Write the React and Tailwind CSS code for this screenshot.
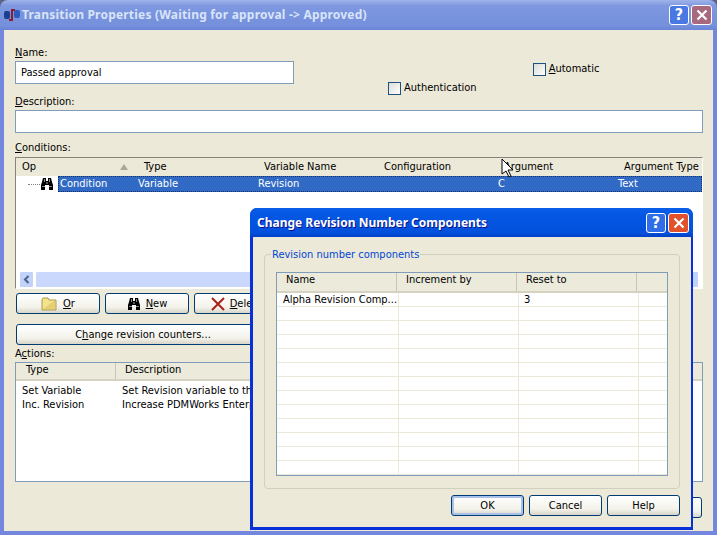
import React from "react";

const Binoculars = () => (
  <svg width="14" height="14" viewBox="0 0 14 14">
    <path d="M1 13V8l1-3 1-4h3v3h2V1h3l1 4 1 3v5H9V8H5v5z" fill="#000" />
    <path d="M2 9h3v1H2zM9 9h3v1H9zM4 2h1v3H4zM9 2h1v3H9z" fill="#8a8a8a" />
    <path d="M6 5h2v2H6z" fill="#555" />
  </svg>
);

const Folder = () => (
  <svg width="16" height="14" viewBox="0 0 16 14">
    <path d="M1 3l1-2h5l1 2h7v10H1z" fill="#f4e38a" stroke="#a89a52" />
    <path d="M2 12l11-8h1v8z" fill="#e5cf72" />
  </svg>
);

const RedX = () => (
  <svg width="16" height="16" viewBox="0 0 16 16">
    <path d="M2 2l12 12M14 2L2 14" stroke="#a8201a" strokeWidth="2" fill="none" />
  </svg>
);

const AppIcon = () => (
  <svg width="16" height="14" viewBox="0 0 16 14">
    <rect x="0" y="3" width="6" height="8" rx="2" fill="#1d3f90" />
    <rect x="10" y="2" width="6" height="8" rx="2" fill="#2a5cc0" />
    <path d="M5 12h3V2h3" stroke="#8c1c2c" strokeWidth="2" fill="none" />
  </svg>
);

const Cursor = () => (
  <svg width="13" height="20" viewBox="0 0 13 20" className="absolute left-[501px] top-[158px]">
    <path d="M1 1v15l4-3 3 6 2-1-3-6h5z" fill="#fff" stroke="#000" strokeWidth="1" />
  </svg>
);

const XpButton = ({ className = "", children }) => (
  <div
    className={`flex h-[21px] items-center justify-center rounded-[3px] border border-[#003c74] bg-[linear-gradient(#ffffff,#f3f2ea_70%,#d8d4c8)] text-black ${className}`}
  >
    {children}
  </div>
);

const CaptionButtons = ({ active }) => (
  <div className="flex gap-[2px]">
    <div
      className={`flex h-[20px] w-[20px] items-center justify-center rounded-[3px] border border-white text-[16px] font-bold text-white ${
        active ? "bg-[#2f6ee8]" : "bg-[#4a78e2]"
      }`}
    >
      ?
    </div>
    <div
      className={`flex h-[20px] w-[21px] items-center justify-center rounded-[3px] border border-white ${
        active ? "bg-[#e0512c]" : "bg-[#a8687e]"
      }`}
    >
      <svg width="12" height="12" viewBox="0 0 12 12">
        <path d="M1.5 1.5l9 9M10.5 1.5l-9 9" stroke="#fff" strokeWidth="2.2" fill="none" />
      </svg>
    </div>
  </div>
);

const Check = ({ label, className = "" }) => (
  <div className={`flex h-[14px] items-center gap-[3px] ${className}`}>
    <div className="h-[13px] w-[13px] border border-[#1c5180] bg-[linear-gradient(135deg,#dcdcd7,#ffffff)]" />
    {label}
  </div>
);

const dialogRows = Array.from({ length: 13 });

const ChangeDialog = () => (
  <div className="absolute left-[250px] top-[208px] flex h-[322px] w-[443px] flex-col rounded-t-[7px] bg-[#0831d9] pb-[3px] pl-[3px] pr-[2px]">
    <div className="-mx-[3px] -mr-[2px] flex h-[29px] shrink-0 items-center justify-between rounded-t-[7px] bg-[linear-gradient(#0a5fe8,#0458e4_20%,#0350dc_85%,#0340c4)] pl-[7px] pr-[4px]">
      <span className="font-['Noto_Sans'] text-[12px] font-bold text-white [text-shadow:1px_1px_#0f1089]">
        Change Revision Number Components
      </span>
      <CaptionButtons active />
    </div>
    <div className="flex flex-1 flex-col bg-[#ece9d8] px-[11px] pt-[17px]">
      <div className="relative h-[235px] rounded-[4px] border border-[#d0d0bf] px-[11px] pt-[17px]">
        <span className="absolute -top-[7px] left-[6px] bg-[#ece9d8] px-[1px] text-[#0046d5]">
          Revision number components
        </span>
        <div className="h-[204px] border border-[#7f9db9] bg-white">
          <div className="grid h-[20px] grid-cols-[120px_120px_120px_1fr] border-b-2 border-[#d6d2c2] bg-[#ebeadb]">
            <div className="border-r border-[#c7c5b2] pl-[9px]">Name</div>
            <div className="border-r border-[#c7c5b2] pl-[9px]">Increment by</div>
            <div className="border-r border-[#c7c5b2] pl-[9px]">Reset to</div>
            <div />
          </div>
          {dialogRows.map((_, i) => (
            <div
              key={i}
              className="grid h-[14px] grid-cols-[122px_120px_120px_1fr] border-b border-[#ece9d8] leading-[14px]"
            >
              <div className="overflow-hidden whitespace-nowrap border-r border-[#ece9d8] pl-[6px]">
                {i === 0 ? "Alpha Revision Comp..." : ""}
              </div>
              <div className="border-r border-[#ece9d8]" />
              <div className="border-r border-[#ece9d8] pl-[5px]">{i === 0 ? "3" : ""}</div>
              <div />
            </div>
          ))}
        </div>
      </div>
      <div className="mt-[6px] flex justify-end gap-[5px] pr-0">
        <XpButton className="w-[73px] shadow-[inset_0_0_0_2px_#a8c0ea]">OK</XpButton>
        <XpButton className="w-[73px]">Cancel</XpButton>
        <XpButton className="w-[73px]">Help</XpButton>
      </div>
    </div>
  </div>
);

export default function App() {
  return (
    <div className="relative flex h-[535px] w-[717px] flex-col overflow-hidden bg-[#5a6488] font-['DejaVu_Sans_Condensed','Noto_Sans',sans-serif] text-[11px] leading-[14px] text-black">
      {/* main window, inactive caption */}
      <div className="flex h-[30px] shrink-0 items-center justify-between rounded-t-[8px] bg-[linear-gradient(#a0b4ea,#7d97e0_20%,#7590dc_85%,#6a84d6)] pl-[4px] pr-[5px]">
        <div className="flex items-center gap-[2px]">
          <AppIcon />
          <span className="font-['Noto_Sans'] text-[12px] font-bold tracking-[0.2px] text-[#d8e4f8]">
            Transition Properties (Waiting for approval -&gt; Approved)
          </span>
        </div>
        <CaptionButtons />
      </div>

      <div className="flex flex-1 flex-col bg-[#7387de] px-[4px] pb-[4px]">
        <div className="flex flex-1 flex-col bg-[#ece9d8] pl-[11px] pr-[10px] pt-[16px]">
          <div className="flex h-[49px]">
            <div className="w-[279px]">
              <div>
                <span className="underline">N</span>ame:
              </div>
              <div className="mt-[1px] flex h-[23px] items-center border border-[#7f9db9] bg-white pl-[5px]">
                Passed approval
              </div>
            </div>
            <Check label="Authentication" className="ml-[94px] mt-[35px]" />
            <Check
              label={
                <span>
                  <span className="underline">A</span>utomatic
                </span>
              }
              className="ml-[56px] mt-[16px]"
            />
          </div>

          <div>
            <span className="underline">D</span>escription:
          </div>
          <div className="mt-[1px] h-[23px] border border-[#7f9db9] bg-white" />

          <div className="mt-[8px]">
            <span className="underline">C</span>onditions:
          </div>
          {/* conditions list */}
          <div className="mt-[2px] flex h-[132px] flex-col border border-b-white border-l-[#85837a] border-r-white border-t-[#85837a] bg-white">
            <div className="relative grid h-[18px] shrink-0 grid-cols-[121px_120px_120px_120px_120px_1fr] items-center bg-[#ece9d8] pl-[6px]">
              <div>Op</div>
              <div className="pl-[1px]">Type</div>
              <div className="pl-[1px]">Variable Name</div>
              <div className="pl-[1px]">Configuration</div>
              <div className="pl-[1px]">Argument</div>
              <div className="pl-[1px]">Argument Type</div>
              <div className="absolute left-[104px] top-[6px] h-0 w-0 border-x-[4px] border-b-[6px] border-x-transparent border-b-[#aca899]" />
            </div>
            <div className="flex h-[16px] shrink-0 items-center">
              <div className="ml-[12px] w-[12px] border-t border-dotted border-[#808080]" />
              <Binoculars />
              <div className="ml-[4px] grid h-[16px] flex-1 grid-cols-[78px_120px_240px_120px_1fr] items-center border border-dotted border-[#16306a] bg-[#316ac5] pl-[1px] text-white">
                <div>Condition</div>
                <div>Variable</div>
                <div>Revision</div>
                <div>C</div>
                <div>Text</div>
              </div>
            </div>
            <div className="flex-1" />
            <div className="flex h-[17px] shrink-0 gap-[1px] px-[3px]">
              <div className="flex w-[15px] items-center justify-center rounded-[2px] border border-white bg-[#c1d3fb] text-[#4d6185]">
                <svg width="7" height="9" viewBox="0 0 7 9">
                  <path d="M5.5 1L2 4.5 5.5 8" stroke="#4d6185" strokeWidth="2" fill="none" />
                </svg>
              </div>
              <div className="flex-1 rounded-[2px] border border-white bg-[#c9d8fc]" />
              <div className="w-[15px] rounded-[2px] border border-white bg-[#c1d3fb]" />
            </div>
          </div>

          <div className="mt-[4px] flex gap-[5px] pl-[1px]">
            <XpButton className="w-[84px] gap-[6px]">
              <Folder />
              <span>
                <span className="underline">O</span>r
              </span>
            </XpButton>
            <XpButton className="w-[84px] gap-[5px]">
              <Binoculars />
              <span>
                <span className="underline">N</span>ew
              </span>
            </XpButton>
            <XpButton className="w-[84px] gap-[4px]">
              <RedX />
              <span>
                <span className="underline">D</span>elete
              </span>
            </XpButton>
          </div>
          <XpButton className="ml-[1px] mt-[10px] w-[254px]">
            <span>
              C<span className="underline">h</span>ange revision counters...
            </span>
          </XpButton>

          <div className="mt-[2px]">
            A<span className="underline">c</span>tions:
          </div>
          {/* actions list */}
          <div className="mt-[1px] h-[120px] border border-[#7f9db9] bg-white">
            <div className="grid h-[18px] grid-cols-[100px_1fr] border-b-2 border-[#d6d2c2] bg-[#ebeadb]">
              <div className="border-r border-[#c7c5b2] pl-[10px]">Type</div>
              <div className="pl-[9px]">Description</div>
            </div>
            <div className="grid grid-cols-[100px_1fr] pl-[6px] pt-[3px]">
              <div>Set Variable</div>
              <div className="whitespace-nowrap">Set Revision variable to the</div>
              <div>Inc. Revision</div>
              <div className="whitespace-nowrap">Increase PDMWorks Enterprise</div>
            </div>
          </div>

          <div className="mt-[15px] flex justify-end pr-[1px]">
            <XpButton className="w-[73px]" />
          </div>
        </div>
      </div>

      <ChangeDialog />
      <Cursor />
    </div>
  );
}
